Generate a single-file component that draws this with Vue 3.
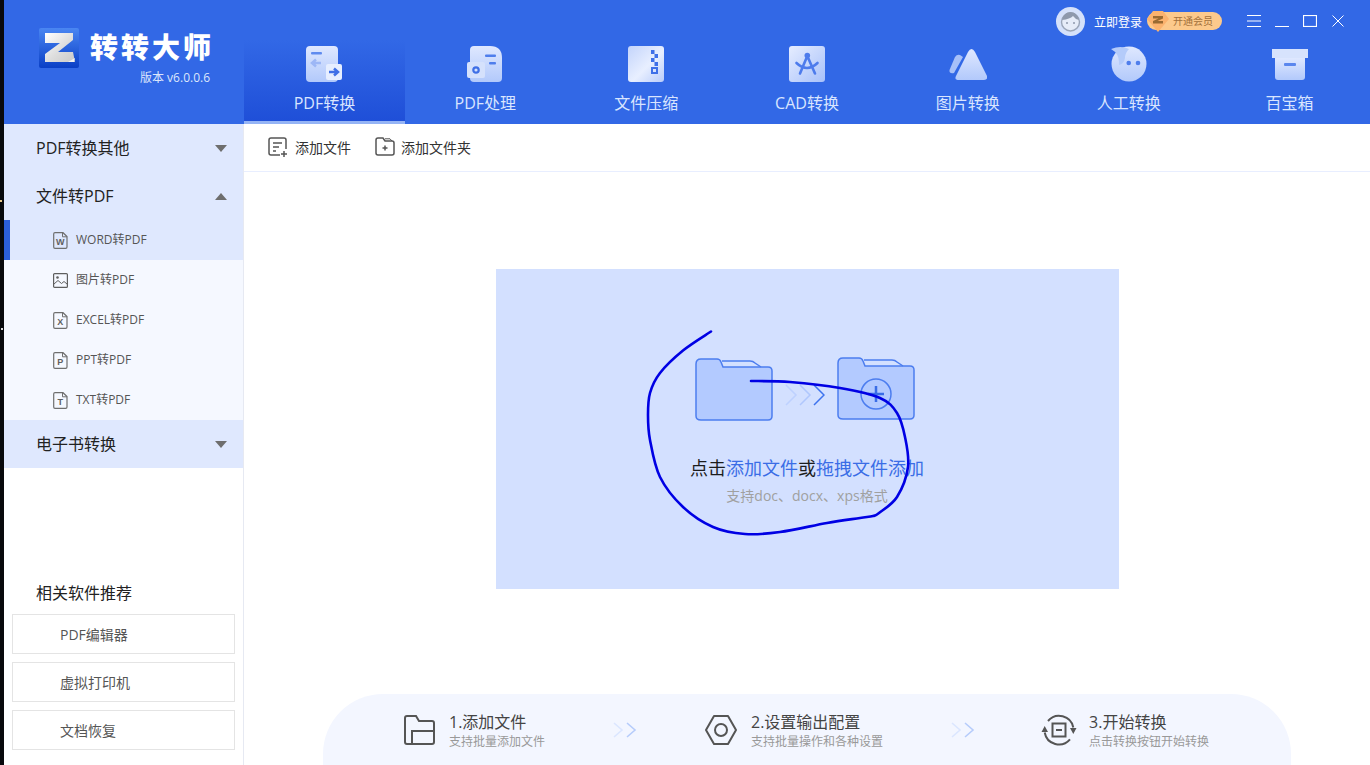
<template>
  <div class="app">
    <div class="strip">
      <i class="speck speck-a"></i>
      <i class="speck speck-b"></i>
    </div>
    <div class="window">
      <header class="header">
        <div class="brand">
          <svg class="logo" width="40" height="40" viewBox="0 0 40 40">
            <defs>
              <linearGradient id="logoBg" x1="0" y1="0" x2="0" y2="1">
                <stop offset="0" stop-color="#4a86f2" />
                <stop offset="1" stop-color="#0a3fc6" />
              </linearGradient>
              <linearGradient id="logoZ" x1="0" y1="0" x2="1" y2="1">
                <stop offset="0" stop-color="#ffffff" />
                <stop offset="0.55" stop-color="#dddddd" />
                <stop offset="1" stop-color="#c9c9c9" />
              </linearGradient>
              <linearGradient id="ico" x1="0" y1="0" x2="1" y2="1">
                <stop offset="0" stop-color="#e6edff" />
                <stop offset="1" stop-color="#a8c1fa" />
              </linearGradient>
              <linearGradient id="icoV" x1="0" y1="0" x2="0" y2="1">
                <stop offset="0" stop-color="#dfe8ff" />
                <stop offset="1" stop-color="#b2c9fb" />
              </linearGradient>
              <linearGradient id="zip" x1="0" y1="0" x2="1" y2="1">
                <stop offset="0" stop-color="#c3d4fb" />
                <stop offset="0.55" stop-color="#e8efff" />
                <stop offset="1" stop-color="#b9ccfa" />
              </linearGradient>
            </defs>
            <rect width="40" height="40" rx="2" fill="url(#logoBg)" />
            <path d="M6 5H34V12L19 24H34L36 34H6V26L21 15H6Z" fill="url(#logoZ)" />
            <path d="M29 34L36 30L35 34Z" fill="#f2f2f2" />
          </svg>
          <div class="brand-text">
            <div class="brand-name">转转大师</div>
            <div class="brand-ver">版本 v6.0.0.6</div>
          </div>
        </div>

        <div class="header-right">
          <div class="topbar">
            <svg class="avatar" width="29" height="29" viewBox="0 0 29 29">
              <circle cx="14.5" cy="14.5" r="14.5" fill="#d5e1fa" />
              <circle cx="14.5" cy="15" r="9" fill="#e6ecf8" stroke="#9aa5b8" stroke-width="1.4" />
              <path d="M6 13Q8 5 14.5 5Q21 5 23 13Q19 12 17 9Q14 12 6 13Z" fill="#8e99ac" />
              <circle cx="11" cy="16" r="1" fill="#8e99ac" />
              <circle cx="18" cy="16" r="1" fill="#8e99ac" />
            </svg>
            <span class="login">立即登录</span>
            <div class="vip">
              <svg class="vip-mark" width="24" height="23" viewBox="0 0 24 23">
                <path d="M7 1H17L23 9L12 22L1 9Z" fill="#fbb26e" />
                <path d="M7 6H17V8.500L11.500 11H17V13.500H7V11L12.500 8.500H7Z" fill="#9a6a32" />
              </svg>
              <span>开通会员</span>
            </div>
            <div class="win-btns">
              <svg width="14" height="12" viewBox="0 0 14 12"><path d="M0 .5H14M0 6H14M0 11.500H14" stroke="#fff" /></svg>
              <svg width="14" height="12" viewBox="0 0 14 12"><path d="M0 11.500H14" stroke="#fff" /></svg>
              <svg width="14" height="12" viewBox="0 0 14 12"><rect x=".5" y=".5" width="13" height="11" fill="none" stroke="#fff" stroke-width="1.200" /></svg>
              <svg class="win-close" width="12" height="12" viewBox="0 0 12 12"><path d="M.5 .5L11.500 11.500M11.500 .5L.5 11.500" stroke="#fff" /></svg>
            </div>
          </div>

          <nav class="tabs">
            <div v-for="(tab, i) in tabs" :key="tab" :class="['tab', { active: i === 0 }]">
              <svg class="tab-icon" width="38" height="36" viewBox="-1 0 38 36">
                <template v-if="i === 0">
                  <rect x="0" y="0" width="32" height="36" rx="4" fill="url(#icoV)" />
                  <rect x="5" y="6" width="11" height="2.500" rx="1" fill="#5f8bef" />
                  <path d="M15 17H7M10 13.500L6 17L10 20.500" fill="none" stroke="#9db7f6" stroke-width="2.500" />
                  <rect x="20" y="18" width="16" height="16" rx="2" fill="#e6eeff" />
                  <path d="M23 26H31M28 22.500L32 26L28 29.500" fill="none" stroke="#3f6fe6" stroke-width="2.500" />
                </template>
                <template v-else-if="i === 1">
                  <path d="M7 0H23Q35 0 35 12V32Q35 36 31 36H7Q3 36 3 32V4Q3 0 7 0Z" fill="url(#icoV)" />
                  <rect x="18" y="8.500" width="11" height="2.500" rx="1" fill="#4f7eec" />
                  <rect x="22" y="16" width="7" height="2.500" rx="1" fill="#4f7eec" />
                  <rect x="0" y="16" width="18" height="16" rx="2" fill="#d5e1fc" />
                  <circle cx="9" cy="24" r="2.700" fill="none" stroke="#3f6fe6" stroke-width="2.200" />
                </template>
                <template v-else-if="i === 2">
                  <rect x="0" y="0" width="36" height="36" rx="3" fill="url(#zip)" />
                  <path d="M23 4H26.500V8H30V12H26.500V16H30V20H26.500V16H23V12H26.500V8H23Z" fill="#3f70e8" />
                  <rect x="24" y="22" width="5" height="5" fill="none" stroke="#3f70e8" stroke-width="2" />
                </template>
                <template v-else-if="i === 3">
                  <rect x="0" y="0" width="36" height="36" rx="3" fill="url(#ico)" />
                  <circle cx="18.300" cy="9.500" r="2.800" fill="#4d7bec" />
                  <path d="M18.300 10L11 27.500M18.300 10L26 27.500M7.500 17Q18 27 28.500 17" fill="none" stroke="#4d7bec" stroke-width="2.600" stroke-linecap="round" />
                </template>
                <template v-else-if="i === 4">
                  <path d="M-.5 24L5 11Q7 8 10 9L13 11L4 27Q-1 28 -.5 24Z" fill="#a7c0f8" />
                  <path d="M18 6Q21.500 0 25 6L37 30Q38 34 34 34H9Q4 34 6 30Z" fill="url(#icoV)" />
                </template>
                <template v-else-if="i === 5">
                  <circle cx="18" cy="18" r="17.500" fill="url(#icoV)" />
                  <path d="M0 3Q10 -1 18 3Q14 7 14 12Q13 18 8 19Q9 8 0 3Z" fill="#b4cbfa" />
                  <circle cx="17.700" cy="17" r="2.300" fill="#4f7eec" />
                  <circle cx="27" cy="17" r="2.300" fill="#4f7eec" />
                </template>
                <template v-else>
                  <rect x="0" y="3" width="36" height="9" fill="#d7e3fd" />
                  <path d="M3 12H33V31Q33 34 30 34H6Q3 34 3 31Z" fill="url(#icoV)" />
                  <rect x="12" y="17" width="12" height="3" rx="1" fill="#5b87ee" />
                </template>
              </svg>
              <span class="tab-label">{{ tab }}</span>
            </div>
          </nav>
        </div>
      </header>

      <div class="body">
        <aside class="side">
          <div class="group">
            <span>PDF转换其他</span>
            <i class="arrow down"></i>
          </div>
          <div class="group">
            <span>文件转PDF</span>
            <i class="arrow up"></i>
          </div>
          <ul class="items">
            <li v-for="(item, i) in items" :key="item.name" :class="{ current: i === 0 }">
              <svg width="15" height="17" viewBox="0 0 15 17">
                <template v-if="item.mark">
                  <path d="M2 .7H10L14 4.500V15Q14 16.300 12.700 16.300H2Q.7 16.300 .7 15V2Q.7 .7 2 .7Z" fill="none" stroke="#6f6f6f" stroke-width="1.200" />
                  <path d="M9.500 .7V4.800H14" fill="none" stroke="#6f6f6f" />
                  <text x="7.300" y="13" text-anchor="middle" class="mark">{{ item.mark }}</text>
                </template>
                <template v-else>
                  <rect x=".6" y="1.600" width="13.800" height="13.800" rx="1" fill="none" stroke="#5f5f5f" stroke-width="1.200" />
                  <circle cx="4.500" cy="5.500" r="1.300" fill="#5f5f5f" />
                  <path d="M1 12L5 8.500L8.500 11.500L11 9.500L14 12" fill="none" stroke="#5f5f5f" />
                </template>
              </svg>
              <span>{{ item.name }}</span>
            </li>
          </ul>
          <div class="group">
            <span>电子书转换</span>
            <i class="arrow down"></i>
          </div>

          <div class="recommend">
            <div class="rec-title">相关软件推荐</div>
            <div v-for="r in recommend" :key="r" class="rec-btn">{{ r }}</div>
          </div>
        </aside>

        <main class="main">
          <div class="toolbar">
            <div class="tool">
              <svg width="20" height="20" viewBox="0 0 20 20">
                <path d="M12 18H3Q1 18 1 16V3Q1 1 3 1H16Q18 1 18 3V12" fill="none" stroke="#555" stroke-width="1.500" />
                <path d="M5 6H14M5 10H11M5 14H8" stroke="#555" stroke-width="1.500" />
                <path d="M16 14V20M13 17H19" stroke="#555" stroke-width="1.500" />
              </svg>
              <span>添加文件</span>
            </div>
            <div class="tool">
              <svg width="20" height="20" viewBox="0 0 20 20">
                <path d="M1 3Q1 1 3 1H8L10 4H17Q19 4 19 6V16Q19 18 17 18H3Q1 18 1 16Z" fill="none" stroke="#555" stroke-width="1.500" />
                <path d="M10 1.800H15L17 4" fill="none" stroke="#555" />
                <path d="M10 8.500V13.500M7.500 11H12.500" stroke="#555" stroke-width="1.500" />
              </svg>
              <span>添加文件夹</span>
            </div>
          </div>

          <div class="content">
            <section class="drop">
              <div class="drop-art">
                <svg width="78" height="64" viewBox="0 0 78 64">
                  <path d="M1 6Q1 1 6 1H22Q25 1 26 4L28 9H73Q77 9 77 13V58Q77 62 73 62H6Q1 62 1 58Z" fill="#b3caff" stroke="#4c7def" stroke-width="1.500" />
                  <path d="M27 3H55Q58 3 60 5L66 9" fill="none" stroke="#4c7def" stroke-width="1.500" />
                </svg>
                <svg class="chev" width="40" height="22" viewBox="0 0 40 22">
                  <path d="M1 1L11 11L1 21" fill="none" stroke="#bed1ff" stroke-width="1.500" />
                  <path d="M15 1L25 11L15 21" fill="none" stroke="#b0c7fd" stroke-width="1.500" />
                  <path d="M29 1L39 11L29 21" fill="none" stroke="#3d73ee" stroke-width="1.500" />
                </svg>
                <svg class="folder-add" width="78" height="64" viewBox="0 0 78 64">
                  <path d="M1 6Q1 1 6 1H22Q25 1 26 4L28 9H73Q77 9 77 13V58Q77 62 73 62H6Q1 62 1 58Z" fill="#b3caff" stroke="#4c7def" stroke-width="1.500" />
                  <path d="M27 3H55Q58 3 60 5L66 9" fill="none" stroke="#4c7def" stroke-width="1.500" />
                  <circle cx="39" cy="37" r="15" fill="none" stroke="#4c7def" stroke-width="1.500" />
                  <path d="M39 29V45M31 37H47" stroke="#3a6de6" stroke-width="2.500" />
                </svg>
              </div>
              <div class="drop-title">点击<em>添加文件</em>或<em>拖拽文件添加</em></div>
              <div class="drop-sub">支持doc、docx、xps格式</div>
              <svg class="scribble" width="623" height="320" viewBox="496 269 623 320">
                <path :d="scribble" fill="none" stroke="#0000e4" stroke-width="2.600" stroke-linecap="round" />
              </svg>
            </section>
          </div>

          <div class="steps">
            <div class="step">
              <svg width="32" height="32" viewBox="0 0 32 32">
                <path d="M2 4Q2 2 4 2H13L16 7H29Q31 7 31 9V28Q31 30 29 30H4Q2 30 2 28Z" fill="none" stroke="#555" stroke-width="2" />
                <path d="M9 30V17H31" fill="none" stroke="#555" stroke-width="2" />
              </svg>
              <div class="step-text">
                <div class="step-title">1.添加文件</div>
                <div class="step-sub">支持批量添加文件</div>
              </div>
            </div>
            <svg class="step-chev" width="24" height="16" viewBox="0 0 24 16">
              <path d="M1 1L9 8L1 15" fill="none" stroke="#dbe6ff" stroke-width="1.600" />
              <path d="M14 1L22 8L14 15" fill="none" stroke="#b6ccfb" stroke-width="1.600" />
            </svg>
            <div class="step">
              <svg width="32" height="32" viewBox="0 0 32 32">
                <path d="M9 2H23L31 16L23 30H9L1 16Z" fill="none" stroke="#555" stroke-width="2" stroke-linejoin="round" />
                <circle cx="16" cy="16" r="6" fill="none" stroke="#555" stroke-width="2" />
              </svg>
              <div class="step-text">
                <div class="step-title">2.设置输出配置</div>
                <div class="step-sub">支持批量操作和各种设置</div>
              </div>
            </div>
            <svg class="step-chev" width="24" height="16" viewBox="0 0 24 16">
              <path d="M1 1L9 8L1 15" fill="none" stroke="#dbe6ff" stroke-width="1.600" />
              <path d="M14 1L22 8L14 15" fill="none" stroke="#b6ccfb" stroke-width="1.600" />
            </svg>
            <div class="step">
              <svg width="32" height="32" viewBox="0 0 32 32">
                <path d="M5 7A14.500 14.500 0 0 1 30.300 13.500M27 25.400A14.500 14.500 0 0 1 1.700 18.500" fill="none" stroke="#555" stroke-width="2" />
                <path d="M1.700 12L5 18H-1.500ZM30.300 20L27 14H33.500Z" fill="#555" />
                <rect x="9.500" y="9.500" width="13" height="13" fill="none" stroke="#555" stroke-width="2" />
                <rect x="13" y="15" width="6" height="2" fill="#555" />
              </svg>
              <div class="step-text">
                <div class="step-title">3.开始转换</div>
                <div class="step-sub">点击转换按钮开始转换</div>
              </div>
            </div>
          </div>
        </main>
      </div>
    </div>
  </div>
</template>

<script setup>
const tabs = ['PDF转换', 'PDF处理', '文件压缩', 'CAD转换', '图片转换', '人工转换', '百宝箱']

const items = [
  { name: 'WORD转PDF', mark: 'W' },
  { name: '图片转PDF', mark: '' },
  { name: 'EXCEL转PDF', mark: 'X' },
  { name: 'PPT转PDF', mark: 'P' },
  { name: 'TXT转PDF', mark: 'T' }
]

const recommend = ['PDF编辑器', '虚拟打印机', '文档恢复']

// the hand-drawn loop over the drop area, smoothed through its points
const pts = [
  [711, 331.5], [683, 350.5], [660, 373], [650, 393], [648, 415], [650, 440], [660, 477],
  [683, 507], [713, 527], [745, 534], [780, 532], [827, 523], [860, 518], [873, 516], [879, 513],
  [897, 497], [908, 467], [905, 437], [897, 413], [880, 398], [840, 388],
  [790, 382], [751, 381]
]

const scribble = pts.reduce((d, p, i) => {
  if (i === 0) return `M${p[0]} ${p[1]}`
  const a = pts[i - 2] || pts[i - 1]
  const b = pts[i - 1]
  const c = pts[i + 1] || p
  const c1 = [b[0] + (p[0] - a[0]) / 6, b[1] + (p[1] - a[1]) / 6]
  const c2 = [p[0] - (c[0] - b[0]) / 6, p[1] - (c[1] - b[1]) / 6]
  return `${d}C${c1[0]} ${c1[1]} ${c2[0]} ${c2[1]} ${p[0]} ${p[1]}`
}, '')
</script>

<style>
body {
  margin: 0;
  background: #fff;
  overflow: hidden;
}
</style>

<style scoped>
.app {
  display: flex;
  width: 1370px;
  height: 765px;
  overflow: hidden;
  font-family: "Open Sans", "Noto Sans CJK SC", sans-serif;
}

.strip {
  position: relative;
  width: 4px;
  background: #08090c;
}

.speck {
  position: absolute;
  width: 2px;
  height: 2px;
}

.speck-a {
  left: 0;
  top: 200px;
  background: #e8c98a;
}

.speck-b {
  left: 1px;
  top: 328px;
  background: #d8d8d8;
}

.window {
  flex: 1;
  display: flex;
  flex-direction: column;
  min-width: 0;
}

.header {
  display: flex;
  height: 124px;
  background: #3268e6;
}

.brand {
  width: 240px;
  display: flex;
  gap: 11px;
  padding: 28px 0 0 35px;
  box-sizing: border-box;
}

.brand-text {
  display: flex;
  flex-direction: column;
  align-items: flex-end;
}

.brand-name {
  font-size: 28px;
  line-height: 38px;
  font-weight: 900;
  letter-spacing: 3px;
  margin-right: -3px;
  color: #fff;
}

.brand-ver {
  margin-top: 3px;
  margin-right: 1px;
  font-size: 12px;
  line-height: 18px;
  color: #dce6fc;
}

.header-right {
  flex: 1;
  display: flex;
  flex-direction: column;
}

.topbar {
  height: 40px;
  display: flex;
  align-items: center;
  padding: 0 26px 0 0;
  justify-content: flex-end;
  margin-top: 1px;
  margin-bottom: -1px;
}

.avatar {
  margin-right: 9px;
}

.login {
  padding-top: 2px;
  font-size: 12px;
  color: #fff;
  margin-right: 5px;
}

.vip {
  position: relative;
  width: 75px;
  height: 18px;
  margin-right: 25px;
  padding-left: 26px;
  box-sizing: border-box;
  border-radius: 9px;
  background: #fcc98c;
  font-size: 10px;
  line-height: 19px;
  color: #a3703a;
}

.vip-mark {
  position: absolute;
  left: -1px;
  top: -2px;
}

.win-btns {
  display: flex;
  align-items: center;
  gap: 14px;
}

.win-close {
  margin-left: 1px;
}

.tabs {
  flex: 1;
  display: grid;
  grid-template-columns: repeat(7, 1fr);
}

.tab {
  display: flex;
  flex-direction: column;
  align-items: center;
  padding-top: 6px;
  box-sizing: border-box;
  border-bottom: 3px solid transparent;
}

.tab.active {
  background: linear-gradient(#3268e6, #1f4fd8);
  border-bottom-color: #95b4f5;
}

.tab-label {
  margin-top: 9px;
  font-size: 16px;
  line-height: 24px;
  color: #d9e5ff;
}

.body {
  flex: 1;
  display: flex;
  min-height: 0;
}

.side {
  width: 239px;
  display: flex;
  flex-direction: column;
  border-right: 1px solid #e6e9f2;
}

.group {
  height: 48px;
  display: flex;
  align-items: center;
  justify-content: space-between;
  padding: 0 16px 0 32px;
  background: #dfe8fe;
  font-size: 16px;
  color: #222;
}

.group span {
  padding-bottom: 2px;
}

.arrow {
  width: 0;
  height: 0;
  border-left: 6px solid transparent;
  border-right: 6px solid transparent;
}

.arrow.down {
  border-top: 7px solid #6e6e6e;
}

.arrow.up {
  border-bottom: 7px solid #6e6e6e;
}

.items {
  list-style: none;
  margin: 0;
  padding: 0;
  background: #f5f8ff;
}

.items li {
  height: 40px;
  display: flex;
  align-items: center;
  gap: 8px;
  padding-left: 49px;
  font-size: 12px;
  color: #555;
}

.items li span {
  padding-bottom: 2px;
}

.items li.current {
  background: #dfe8fe;
  box-shadow: inset 6px 0 0 #2c5fd9;
}

.mark {
  font-size: 9px;
  font-weight: 700;
  fill: #5f5f5f;
  font-family: "Liberation Sans", sans-serif;
}

.recommend {
  margin-top: auto;
  padding: 0 8px 15px;
}

.rec-title {
  padding-left: 24px;
  font-size: 16px;
  line-height: 24px;
  color: #222;
  margin-bottom: 9px;
}

.rec-btn {
  height: 40px;
  box-sizing: border-box;
  margin-bottom: 8px;
  padding-left: 47px;
  border: 1px solid #e4e4e4;
  font-size: 14px;
  line-height: 40px;
  color: #555;
}

.rec-btn:last-child {
  margin-bottom: 0;
}

.main {
  flex: 1;
  display: flex;
  flex-direction: column;
  min-width: 0;
}

.toolbar {
  height: 48px;
  display: flex;
  align-items: center;
  gap: 24px;
  padding: 0 0 2px 24px;
  box-sizing: border-box;
  border-bottom: 1px solid #e8eeff;
}

.tool {
  display: flex;
  align-items: center;
  gap: 7px;
  font-size: 14px;
  color: #333;
}

.tool + .tool {
  gap: 6px;
}

.content {
  flex: 1;
  display: flex;
  justify-content: center;
  padding-top: 97px;
}

.drop {
  position: relative;
  width: 623px;
  height: 320px;
  display: flex;
  flex-direction: column;
  align-items: center;
  padding-top: 89px;
  box-sizing: border-box;
  background: #d3e0ff;
}

.drop-art {
  display: flex;
  align-items: center;
  gap: 12px;
  padding-right: 4px;
}

.chev {
  margin-top: 9px;
}

.folder-add {
  margin-top: -1px;
  margin-bottom: 1px;
}

.drop-title {
  margin-top: 34px;
  font-size: 18px;
  line-height: 24px;
  color: #1c1c1c;
}

.drop-title em {
  font-style: normal;
  color: #3a6de6;
}

.drop-sub {
  margin-top: 6px;
  font-size: 14px;
  line-height: 20px;
  color: #a0a0a0;
}

.scribble {
  position: absolute;
  left: 0;
  top: 0;
}

.steps {
  align-self: center;
  width: 968px;
  height: 71px;
  display: flex;
  align-items: center;
  gap: 68px;
  padding: 0 0 0 80px;
  box-sizing: border-box;
  border-radius: 60px 60px 0 0;
  background: #f3f6ff;
}

.step {
  display: flex;
  align-items: center;
  gap: 14px;
}

.step svg {
  overflow: visible;
}

.step-text {
  display: flex;
  flex-direction: column;
  padding-top: 2px;
}

.step-title {
  margin: -1px 0 1px;
  font-size: 16px;
  line-height: 22px;
  color: #444;
}

.step-sub {
  font-size: 12px;
  line-height: 16px;
  color: #999;
}

.step-chev {
  margin-top: 1px;
}
</style>
